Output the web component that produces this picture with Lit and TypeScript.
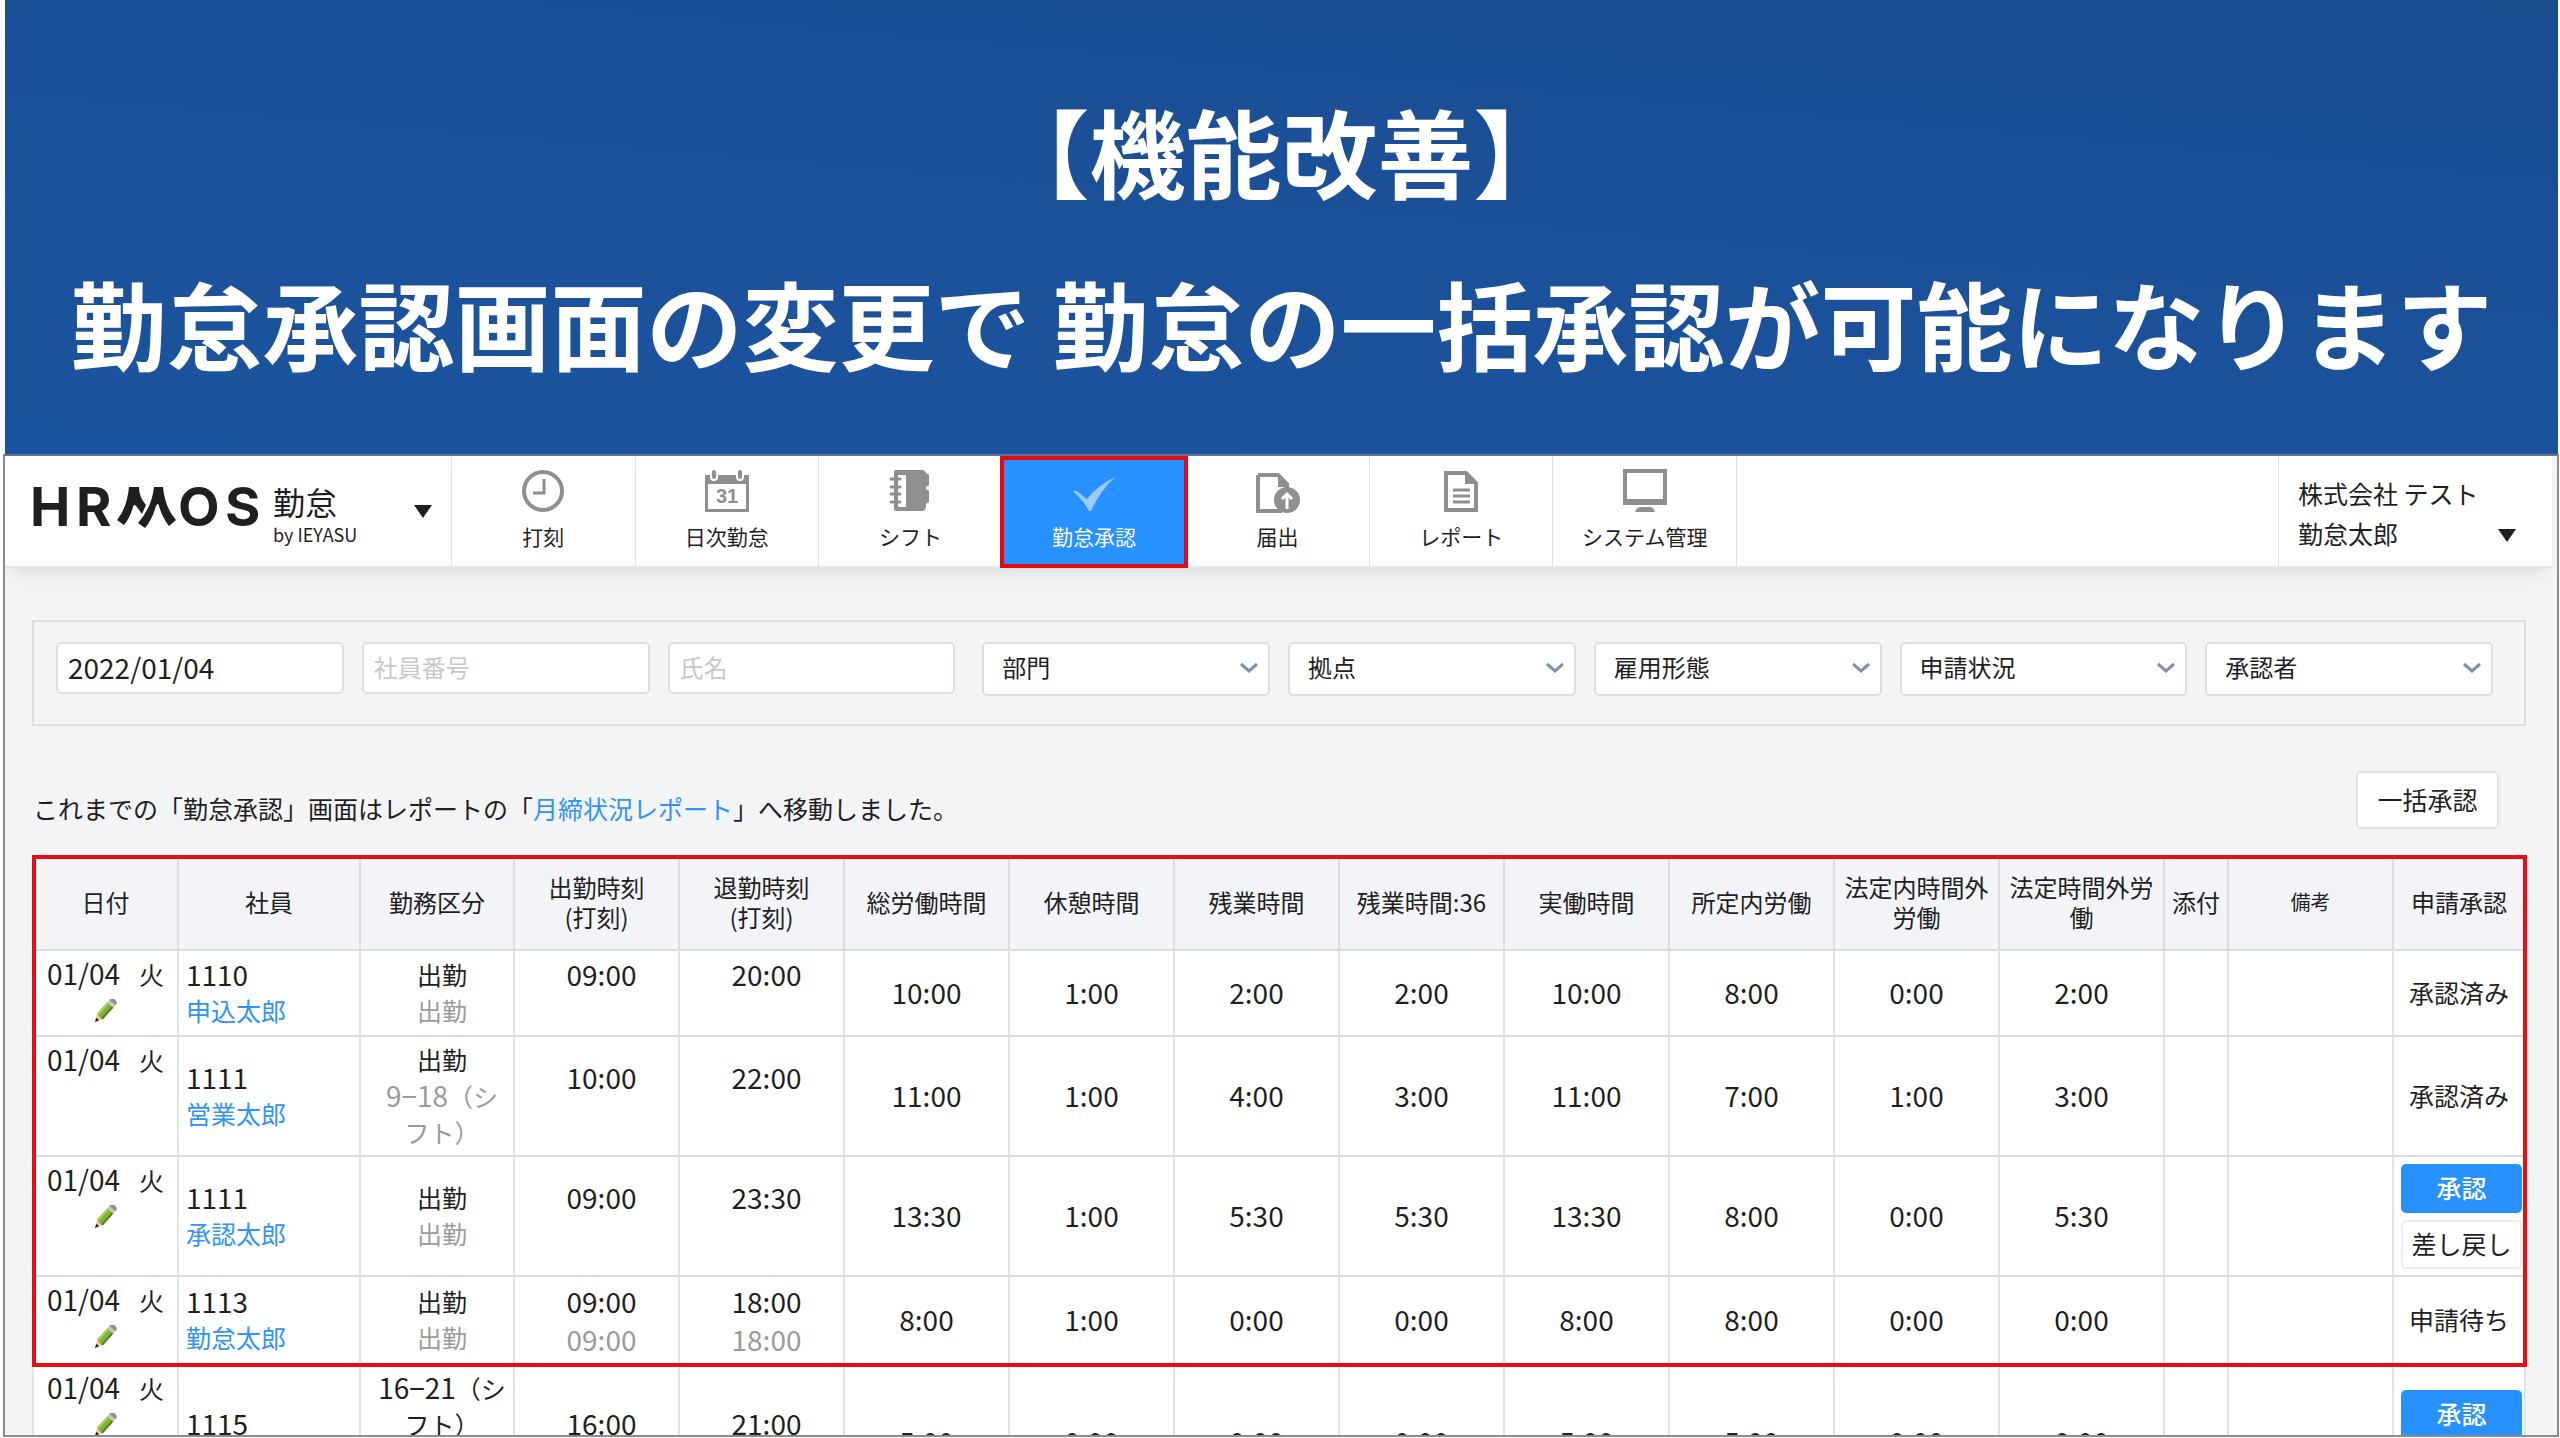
import { LitElement, html, css, svg, nothing } from "lit";
import { customElement, property } from "lit/decorators.js";
import { classMap } from "lit/directives/class-map.js";

interface NavItem {
  label: string;
  icon: string;
  active?: boolean;
}

interface Row {
  editable: boolean;
  id: string;
  name: string;
  kind: string[];
  plan: string[];
  start: string;
  startPunch?: string;
  end: string;
  endPunch?: string;
  totals: string[];
  status: string;
}

const NAV: NavItem[] = [
  { label: "打刻", icon: "clock" },
  { label: "日次勤怠", icon: "calendar" },
  { label: "シフト", icon: "notebook" },
  { label: "勤怠承認", icon: "check", active: true },
  { label: "届出", icon: "submit" },
  { label: "レポート", icon: "report" },
  { label: "システム管理", icon: "monitor" },
];

const HEADS: string[][] = [
  ["日付"],
  ["社員"],
  ["勤務区分"],
  ["出勤時刻", "(打刻)"],
  ["退勤時刻", "(打刻)"],
  ["総労働時間"],
  ["休憩時間"],
  ["残業時間"],
  ["残業時間:36"],
  ["実働時間"],
  ["所定内労働"],
  ["法定内時間外", "労働"],
  ["法定時間外労", "働"],
  ["添付"],
  ["備考"],
  ["申請承認"],
];

const ROWS: Row[] = [
  {
    editable: true, id: "1110", name: "申込太郎", kind: ["出勤"], plan: ["出勤"],
    start: "09:00", end: "20:00",
    totals: ["10:00", "1:00", "2:00", "2:00", "10:00", "8:00", "0:00", "2:00"],
    status: "承認済み",
  },
  {
    editable: false, id: "1111", name: "営業太郎", kind: ["出勤"], plan: ["9−18", "（シ", "フト）"],
    start: "10:00", end: "22:00",
    totals: ["11:00", "1:00", "4:00", "3:00", "11:00", "7:00", "1:00", "3:00"],
    status: "承認済み",
  },
  {
    editable: true, id: "1111", name: "承認太郎", kind: ["出勤"], plan: ["出勤"],
    start: "09:00", end: "23:30",
    totals: ["13:30", "1:00", "5:30", "5:30", "13:30", "8:00", "0:00", "5:30"],
    status: "",
  },
  {
    editable: true, id: "1113", name: "勤怠太郎", kind: ["出勤"], plan: ["出勤"],
    start: "09:00", startPunch: "09:00", end: "18:00", endPunch: "18:00",
    totals: ["8:00", "1:00", "0:00", "0:00", "8:00", "8:00", "0:00", "0:00"],
    status: "申請待ち",
  },
  {
    editable: true, id: "1115", name: "", kind: ["16−21", "（シ", "フト）"], plan: [],
    start: "16:00", end: "21:00",
    totals: ["5:00", "0:00", "0:00", "0:00", "5:00", "5:00", "0:00", "0:00"],
    status: "",
  },
];

const ICONS: Record<string, unknown> = {
  clock: svg`
    <circle cx="22" cy="22" r="19" fill="none" stroke="#8f8f8f" stroke-width="4"/>
    <path d="M23 10v14H12" fill="none" stroke="#8f8f8f" stroke-width="3"/>`,
  calendar: svg`
    <path d="M0 6h5v2a4 4 0 0 0 8 0V6h18v2a4 4 0 0 0 8 0V6h5v37H0zM3 15v25h38V15z" fill="#8f8f8f" fill-rule="evenodd"/>
    <rect x="7" y="1" width="4" height="9" rx="2" fill="#8f8f8f"/>
    <rect x="33" y="1" width="4" height="9" rx="2" fill="#8f8f8f"/>
    <text x="22" y="34" text-anchor="middle" font-family="Liberation Sans, sans-serif" font-weight="700" font-size="20" fill="#8f8f8f">31</text>`,
  notebook: svg`
    <path d="M8 1h26q3 0 4 3l3 2v10l-3 2v2l3 2v11l-3 2v3q-1 4-4 4H8q-2 0-2-2V3q0-2 2-2zM10 6v32h8V6z" fill="#8f8f8f" fill-rule="evenodd"/>
    <path d="M3 10h9M3 18h9M3 25h9M3 33h9" stroke="#fff" stroke-width="5"/>
    <path d="M3 10h9M3 18h9M3 25h9M3 33h9" stroke="#8f8f8f" stroke-width="3" stroke-linecap="round"/>
    <path d="M8 2v38" stroke="#8f8f8f" stroke-width="4"/>`,
  check: svg`<path d="M1 22q3-1 5 1l9 7Q25 17 43 8 28 22 19 42h-2Q11 31 1 22z" fill="#9ccbff"/>`,
  submit: svg`
    <path d="M2 6h20l9 9v5M2 6v36h24" fill="none" stroke="#8f8f8f" stroke-width="4"/>
    <path d="M22 4l11 11v3H22z" fill="#8f8f8f"/>
    <circle cx="31" cy="31" r="13" fill="#8f8f8f"/>
    <path d="M31 40V26M26 30l5-5 5 5" fill="none" stroke="#fff" stroke-width="3"/>`,
  report: svg`
    <path d="M7 4h20l10 10v27H7z" fill="none" stroke="#8f8f8f" stroke-width="4"/>
    <path d="M26 2l13 13H26z" fill="#8f8f8f"/>
    <path d="M14 21h17M14 27h17M14 33h17" stroke="#8f8f8f" stroke-width="3"/>`,
  monitor: svg`
    <path d="M0 0h44v36H0zM4 4v26h36V4z" fill="#8f8f8f" fill-rule="evenodd"/>
    <path d="M17 38h10q4 1 5 5H12q1-4 5-5z" fill="#8f8f8f"/>`,
};

const caret = html`<svg class="caret" viewBox="0 0 18 13" width="18" height="13" aria-hidden="true"><path d="M0 0h18L9 13z" fill="#1f1f1f"/></svg>`;

@customElement("site-header")
export class SiteHeader extends LitElement {
  static styles = css`
    :host {
      display: flex;
      height: 110px;
      margin-right: 5px;
      background: #fff;
      color: #1f1f1f;
      box-shadow: 0 2px 1px #e6e7e9, 0 14px 16px -8px rgba(0, 0, 0, 0.1);
    }
    .brand {
      flex: 0 0 447px;
      box-sizing: border-box;
      display: flex;
      align-items: center;
      justify-content: space-between;
      padding: 0 15px 0 24px;
      border-right: 1px solid #dfe2e6;
    }
    .names {
      display: flex;
      align-items: center;
      gap: 10px;
    }
    .product {
      display: flex;
      flex-direction: column;
      padding-top: 5px;
      font-size: 32px;
      line-height: 40px;
    }
    .by {
      font-size: 18px;
      line-height: 26px;
    }
    .menu {
      display: flex;
      padding: 4px;
      border: 0;
      background: none;
      cursor: pointer;
    }
    .nav {
      display: flex;
      flex: 0 1 1285px;
    }
    .item {
      position: relative;
      flex: 1 1 0;
      display: flex;
      flex-direction: column;
      align-items: center;
      gap: 9px;
      box-sizing: border-box;
      padding-top: 13px;
      border-right: 1px solid #dfe2e6;
      color: inherit;
      text-decoration: none;
      font-size: 21px;
      line-height: 28px;
      white-space: nowrap;
    }
    .item.active {
      z-index: 1;
      background: #2691ff;
      color: #fff;
    }
    .item.active::after {
      content: "";
      position: absolute;
      inset: 0 -3px -2px -3px;
      border: 4px solid #e50914;
    }
    .icon {
      overflow: visible;
    }
    .user {
      flex: 0 0 274px;
      margin-left: auto;
      box-sizing: border-box;
      display: flex;
      align-items: flex-end;
      justify-content: space-between;
      padding: 0 32px 13px 19px;
      border-left: 1px solid #dfe2e6;
      font-size: 25px;
      line-height: 40px;
      white-space: nowrap;
    }
    .user .menu {
      padding: 11px 4px;
    }
  `;

  render() {
    return html`
      <div class="brand">
        <div class="names">
          <svg width="234" height="74" viewBox="-4 -9 234 74" role="img" aria-label="HRMOS">
            <g font-family="Inter, sans-serif" font-weight="700" font-size="54" fill="#1f1f1f">
              <text x="-3" y="43">H</text>
              <text x="43" y="43">R</text>
              <text x="145" y="43">O</text>
              <text x="192" y="43">S</text>
            </g>
            <path d="M96 4h10q0 10 7 18l-4 9-5-7q-3-4-4 0-3 11-9 18l-7-5Q94 25 96 4z" fill="#1f1f1f"/>
            <path d="M121 4h9q2 21 13 33l-7 6q-7-9-10-20-1-4-3 0-4 14-11 22l-7-5q14-16 16-36z" fill="#1f1f1f"/>
          </svg>
          <div class="product"><span>勤怠</span><span class="by">by IEYASU</span></div>
        </div>
        <button class="menu" aria-label="サービス切替">${caret}</button>
      </div>
      <nav class="nav">
        ${NAV.map(
          (n) => html`<a href="#" class=${classMap({ item: true, active: !!n.active })}>
            <svg class="icon" width="44" height="44" viewBox="0 0 44 44" aria-hidden="true">${ICONS[n.icon]}</svg>
            <span>${n.label}</span>
          </a>`
        )}
      </nav>
      <div class="user">
        <div>株式会社 テスト<br />勤怠太郎</div>
        <button class="menu" aria-label="ユーザーメニュー">${caret}</button>
      </div>
    `;
  }
}

@customElement("filter-bar")
export class FilterBar extends LitElement {
  static styles = css`
    :host {
      display: flex;
      align-items: flex-start;
      box-sizing: border-box;
      height: 106px;
      padding: 20px 31px 0 22px;
      border: 2px solid #dcdfe4;
      gap: 18px;
    }
    .text,
    .select {
      box-sizing: border-box;
      border: 2px solid #dcdfe6;
      border-radius: 5px;
      background: #fff;
      color: #1f1f1f;
      font-family: inherit;
      font-size: 24px;
    }
    .text,
    .pick {
      flex: 1 1 288px;
      min-width: 0;
    }
    .text {
      height: 52px;
      padding: 0 10px 3px;
    }
    .text.last {
      margin-right: 9px;
    }
    .date {
      font-size: 28px;
    }
    .text::placeholder {
      color: #c8c8c8;
      opacity: 1;
    }
    .pick {
      position: relative;
    }
    .select {
      appearance: none;
      width: 100%;
      height: 54px;
      padding: 0 40px 5px 18px;
    }
    .chevron {
      position: absolute;
      right: 12px;
      top: 20px;
      pointer-events: none;
    }
  `;

  render() {
    return html`
      <input class="text date" type="text" aria-label="日付" .value=${"2022/01/04"} />
      <input class="text" type="text" aria-label="社員番号" placeholder="社員番号" />
      <input class="text last" type="text" aria-label="氏名" placeholder="氏名" />
      ${["部門", "拠点", "雇用形態", "申請状況", "承認者"].map(
        (label) => html`<div class="pick">
          <select class="select" aria-label=${label}><option>${label}</option></select>
          <svg class="chevron" width="18" height="12" viewBox="0 0 18 12" aria-hidden="true">
            <path d="M1 2l8 7 8-7" fill="none" stroke="#8193aa" stroke-width="3"/>
          </svg>
        </div>`
      )}
    `;
  }
}

@customElement("attendance-table")
export class AttendanceTable extends LitElement {
  @property({ attribute: false }) rows: Row[] = [];

  static styles = css`
    :host {
      display: block;
      position: relative;
      color: #1f1f1f;
    }
    .table {
      width: 100%;
      table-layout: fixed;
      border-collapse: collapse;
      background: #fff;
      font-size: 25px;
      line-height: 36px;
      text-align: center;
    }
    .c-date { width: 145px; }
    .c-staff { width: 182px; }
    .c-kind { width: 154px; }
    .c-time { width: 165px; }
    .c-file { width: 64px; }
    .c-act { width: 132px; }
    .head {
      padding: 0 0 3px;
      border: 2px solid #d9dde2;
      background: #f3f4f7;
      font-size: 24px;
      line-height: 30px;
      font-weight: 400;
      white-space: nowrap;
    }
    .head.small {
      font-size: 20px;
    }
    .cell {
      padding: 0 0 3px;
      border: 2px solid #d9dde2;
      border-left-color: #e0e3e8;
      border-right-color: #e0e3e8;
      vertical-align: middle;
    }
    .h-head { height: 93px; }
    .h-short { height: 86px; }
    .h-tall { height: 120px; }
    .h-mid { height: 88px; }
    .h-xtall { height: 156px; }
    .cell.date {
      padding: 4px 0 0;
      vertical-align: top;
      white-space: pre;
    }
    .cell.staff {
      padding-left: 7px;
      text-align: left;
    }
    .cell.kind {
      padding: 3px 0 5px 10px;
    }
    .cell.act {
      padding: 0;
    }
    .num {
      font-size: 28px;
    }
    .cell.times {
      padding: 0 0 0 10px;
      line-height: 38px;
      font-size: 28px;
    }
    .sub {
      color: #9b9b9b;
    }
    .kind .sub {
      min-height: 36px;
    }
    .h-xtall .kind .sub {
      min-height: 72px;
    }
    .link {
      color: #2f93f8;
      text-decoration: none;
    }
    .name {
      min-height: 36px;
    }
    .edit {
      display: block;
      width: 24px;
      height: 24px;
      margin: 7px auto 0;
      padding: 0;
      border: 0;
      background: none;
      white-space: normal;
      cursor: pointer;
    }
    .pencil {
      display: block;
    }
    .actions {
      display: flex;
      flex-direction: column;
      gap: 7px;
      padding: 0 2px 0 7px;
    }
    .btn {
      height: 49px;
      padding: 0 0 2px;
      border: 2px solid #ebedf0;
      border-radius: 5px;
      background: #fff;
      color: inherit;
      font-family: inherit;
      font-size: 25px;
      white-space: nowrap;
      cursor: pointer;
    }
    .primary {
      border-color: #2691ff;
      background: #2691ff;
      color: #fff;
      font-weight: 500;
    }
    .callout {
      position: absolute;
      top: -1px;
      left: 0;
      right: -1px;
      height: 512px;
      box-sizing: border-box;
      border: 4px solid #e90c14;
      pointer-events: none;
    }
  `;

  private label(parts: string[]) {
    if (parts.length === 0) return nothing;
    return parts.length === 1
      ? html`<div>${parts[0]}</div>`
      : html`<div><span class="num">${parts[0]}</span>${parts[1]}<br />${parts[2]}</div>`;
  }

  private time(value: string, punch?: string) {
    return html`<td class="cell times"><div>${value}</div><div class="sub">${punch ?? "\u00a0"}</div></td>`;
  }

  render() {
    const heights = ["h-short", "h-tall", "h-tall", "h-mid", "h-xtall"];
    return html`
      <table class="table">
        <colgroup>
          <col class="c-date" /><col class="c-staff" /><col class="c-kind" />
          ${Array.from({ length: 10 }, () => html`<col class="c-time" />`)}
          <col class="c-file" /><col class="c-time" /><col class="c-act" />
        </colgroup>
        <thead>
          <tr class="h-head">
            ${HEADS.map(
              (h) => html`<th scope="col" class=${classMap({ head: true, small: h[0] === "備考" })}>
                ${h[0]}${h[1] ? html`<br />${h[1]}` : nothing}
              </th>`
            )}
          </tr>
        </thead>
        <tbody>
          ${this.rows.map(
            (r, i) => html`<tr class=${heights[i]}>
              <td class="cell date"><span class="num">01/04   </span>火${r.editable
                ? html`<button class="edit" aria-label="編集">
                    <svg class="pencil" width="24" height="24" viewBox="0 0 24 24" aria-hidden="true">
                      <g transform="translate(1 23) rotate(-48)">
                        <path d="M0 0l8-4v8z" fill="#efcb96"/>
                        <path d="M0 0l4-2v4z" fill="#222"/>
                        <path d="M7-4h16v8H7z" fill="#7db336"/>
                        <path d="M7-4h16v2H7z" fill="#a2d257"/>
                        <path d="M7 2h16v2H7z" fill="#557d22"/>
                        <path d="M23-4h3v8h-3z" fill="#c4c4c4"/>
                        <path d="M26-4h1q3 0 3 4t-3 4h-1z" fill="#8f8f8f"/>
                      </g>
                    </svg>
                  </button>`
                : nothing}</td>
              <td class="cell staff"><div class="num">${r.id}</div><div class="name">${r.name
                ? html`<a class="link" href="#">${r.name}</a>`
                : nothing}</div></td>
              <td class="cell kind">${this.label(r.kind)}<div class="sub">${this.label(r.plan)}</div></td>
              ${this.time(r.start, r.startPunch)}${this.time(r.end, r.endPunch)}
              ${r.totals.map((t) => html`<td class="cell num">${t}</td>`)}
              <td class="cell"></td>
              <td class="cell"></td>
              ${r.status
                ? html`<td class="cell">${r.status}</td>`
                : html`<td class="cell act"><div class="actions">
                    <button class="btn primary">承認</button>
                    <button class="btn">差し戻し</button>
                  </div></td>`}
            </tr>`
          )}
        </tbody>
      </table>
      <div class="callout"></div>
    `;
  }
}

@customElement("app-root")
export class AppRoot extends LitElement {
  static styles = css`
    :host {
      display: flex;
      flex-direction: column;
      box-sizing: border-box;
      height: 100vh;
      padding-bottom: 1px;
      overflow: hidden;
      background: #fff;
      color: #1f1f1f;
      font-family: "Noto Sans CJK JP", sans-serif;
    }
    .hero {
      flex: none;
      box-sizing: border-box;
      margin: 0 2px 0 5px;
      padding: 64px 0 46px;
      background: linear-gradient(185deg, #1a4c8e 0%, #1b5098 40%, #1b549e 100%);
      color: #fff;
      font-size: 96px;
      line-height: 172px;
      font-weight: 700;
      text-align: center;
      white-space: nowrap;
    }
    .title {
      margin: 0;
      font: inherit;
    }
    .panel {
      flex: 1 1 0;
      min-height: 0;
      margin: 0 1px 0 3px;
      border: 2px solid #8a8c90;
      border-top-color: #65738c;
      background: #f3f4f6;
      overflow: hidden;
    }
    .content {
      padding: 54px 31px 0 27px;
    }
    .bar {
      display: flex;
      align-items: flex-end;
      justify-content: space-between;
      margin: 45px 0 27px;
      padding: 0 27px 0 1px;
      font-size: 25px;
      line-height: 38px;
    }
    .note {
      margin: 0;
      padding-bottom: 2px;
    }
    .link {
      color: #2f93f8;
      text-decoration: none;
    }
    .bulk {
      width: 143px;
      height: 58px;
      padding: 0 0 3px;
      border: 2px solid #e0e3e8;
      border-radius: 5px;
      background: #fff;
      color: inherit;
      font-family: inherit;
      font-size: 25px;
      cursor: pointer;
    }
  `;

  render() {
    return html`
      <section class="hero">
        <h1 class="title">【機能改善】<br />勤怠承認画面の変更で 勤怠の一括承認が可能になります</h1>
      </section>
      <main class="panel">
        <site-header></site-header>
        <div class="content">
          <filter-bar></filter-bar>
          <div class="bar">
            <p class="note">これまでの「勤怠承認」画面はレポートの「<a class="link" href="#">月締状況レポート</a>」へ移動しました。</p>
            <button class="bulk">一括承認</button>
          </div>
          <attendance-table .rows=${ROWS}></attendance-table>
        </div>
      </main>
    `;
  }
}
